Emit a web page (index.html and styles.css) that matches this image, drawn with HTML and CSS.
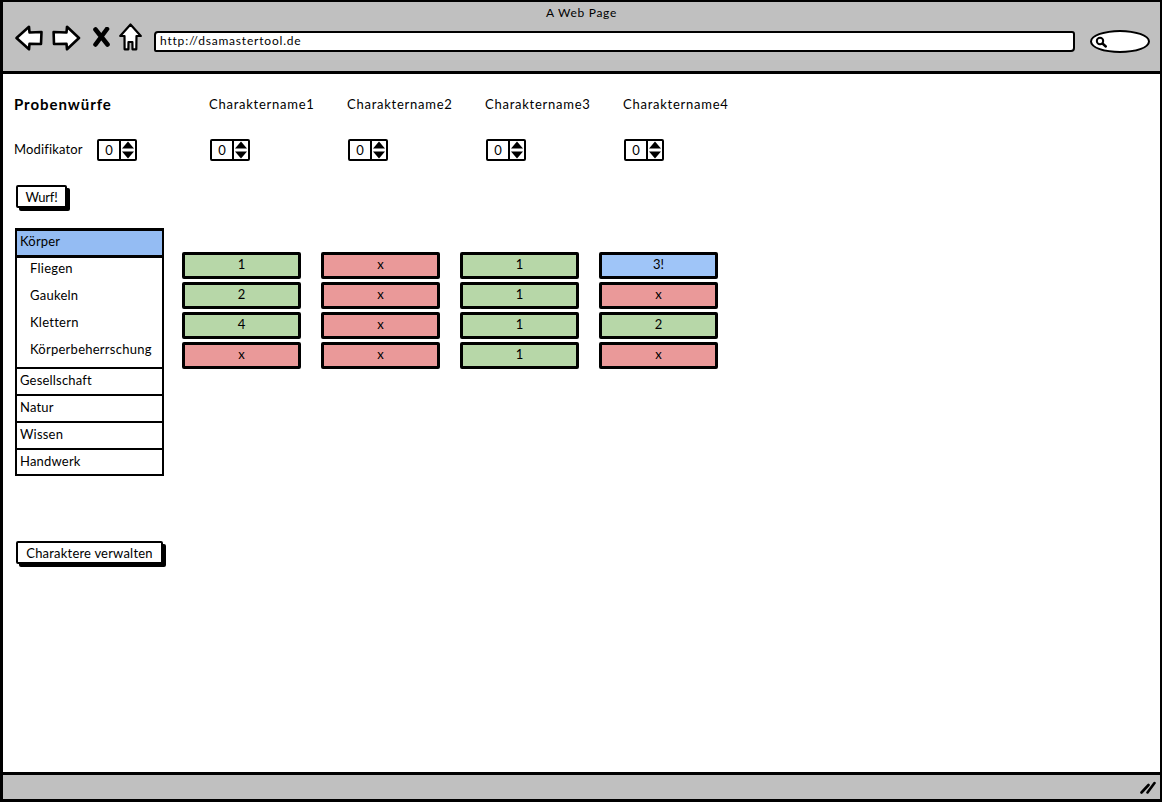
FILE: index.html
```html
<!DOCTYPE html>
<html lang="en">
<head>
<meta charset="UTF-8">
<meta name="viewport" content="width=device-width, initial-scale=1.0">
<title>A Web Page</title>
<link rel="stylesheet" href="styles.css">
</head>
<body>
<div class="window">
    <div class="chrome">
        <div class="title">A Web Page</div>
        <div class="toolbar">
            <svg class="nav-icon back" width="28" height="26" viewBox="0 0 28 26"><path d="M1.5 13 L14 1.8 L14.5 7.5 L26.5 7 L26 19 L14.5 18.8 L14 24.3 Z" fill="#fff" stroke="#000" stroke-width="2.6" stroke-linejoin="round"/></svg>
            <svg class="nav-icon forward" width="29" height="26" viewBox="0 0 29 26"><path d="M27 13 L15 1.8 L14.5 7.5 L1.6 7 L2 19 L14.5 18.8 L15 24.3 Z" fill="#fff" stroke="#000" stroke-width="2.6" stroke-linejoin="round"/></svg>
            <svg class="nav-icon stop" width="17" height="20" viewBox="0 0 17 20"><path d="M2.5 2.5 L14.5 17.5 M14 2 L2.5 17.5" fill="none" stroke="#000" stroke-width="4.6" stroke-linecap="round"/></svg>
            <svg class="nav-icon home" width="23" height="28" viewBox="0 0 23 28"><path d="M11.5 1.5 L21.8 13 L17.5 13 L17.3 26.3 L13.5 26.3 L13.4 19 L9.5 19 L9.4 26.3 L5.6 26.3 L5.5 13 L1.2 13 Z" fill="#fff" stroke="#000" stroke-width="2.2" stroke-linejoin="round"/></svg>
            <div class="url-bar">http://dsamastertool.de</div>
            <div class="search-box">
                <svg width="12" height="12" viewBox="0 0 12 12"><circle cx="5" cy="5" r="3.2" fill="none" stroke="#000" stroke-width="2"/><path d="M7.5 7.5 L10.8 10.5" stroke="#000" stroke-width="2.4" stroke-linecap="round"/></svg>
            </div>
        </div>
    </div>

    <div class="content">
        <div class="head-row">
            <h1 class="page-title">Probenwürfe</h1>
            <div class="char-name">Charaktername1</div>
            <div class="char-name">Charaktername2</div>
            <div class="char-name">Charaktername3</div>
            <div class="char-name">Charaktername4</div>
        </div>

        <div class="mod-row">
            <div class="mod-first">
                <span class="mod-label">Modifikator</span>
                <div class="spinner"><span class="spinner-value">0</span><span class="spinner-arrows"><svg width="14" height="20" viewBox="0 0 14 20"><path d="M7 1.5 L13 8.6 L1 8.6 Z M1 11.4 L13 11.4 L7 18.5 Z" fill="#000"/></svg></span></div>
            </div>
            <div class="spinner"><span class="spinner-value">0</span><span class="spinner-arrows"><svg width="14" height="20" viewBox="0 0 14 20"><path d="M7 1.5 L13 8.6 L1 8.6 Z M1 11.4 L13 11.4 L7 18.5 Z" fill="#000"/></svg></span></div>
            <div class="spinner"><span class="spinner-value">0</span><span class="spinner-arrows"><svg width="14" height="20" viewBox="0 0 14 20"><path d="M7 1.5 L13 8.6 L1 8.6 Z M1 11.4 L13 11.4 L7 18.5 Z" fill="#000"/></svg></span></div>
            <div class="spinner"><span class="spinner-value">0</span><span class="spinner-arrows"><svg width="14" height="20" viewBox="0 0 14 20"><path d="M7 1.5 L13 8.6 L1 8.6 Z M1 11.4 L13 11.4 L7 18.5 Z" fill="#000"/></svg></span></div>
            <div class="spinner"><span class="spinner-value">0</span><span class="spinner-arrows"><svg width="14" height="20" viewBox="0 0 14 20"><path d="M7 1.5 L13 8.6 L1 8.6 Z M1 11.4 L13 11.4 L7 18.5 Z" fill="#000"/></svg></span></div>
        </div>

        <button class="btn btn-roll">Wurf!</button>

        <div class="main-row">
            <div class="side">
                <div class="accordion">
                    <div class="acc-head active">Körper</div>
                    <div class="acc-body">
                        <div class="acc-item">Fliegen</div>
                        <div class="acc-item">Gaukeln</div>
                        <div class="acc-item">Klettern</div>
                        <div class="acc-item">Körperbeherrschung</div>
                    </div>
                    <div class="acc-head">Gesellschaft</div>
                    <div class="acc-head">Natur</div>
                    <div class="acc-head">Wissen</div>
                    <div class="acc-head">Handwerk</div>
                </div>
                <button class="btn btn-manage">Charaktere verwalten</button>
            </div>

            <div class="results">
                <div class="cell ok">1</div>
                <div class="cell fail">x</div>
                <div class="cell ok">1</div>
                <div class="cell crit">3!</div>
                <div class="cell ok">2</div>
                <div class="cell fail">x</div>
                <div class="cell ok">1</div>
                <div class="cell fail">x</div>
                <div class="cell ok">4</div>
                <div class="cell fail">x</div>
                <div class="cell ok">1</div>
                <div class="cell ok">2</div>
                <div class="cell fail">x</div>
                <div class="cell fail">x</div>
                <div class="cell ok">1</div>
                <div class="cell fail">x</div>
            </div>
        </div>
    </div>

    <div class="statusbar">
        <svg width="16" height="13" viewBox="0 0 16 13"><path d="M1.5 11.5 L8.5 4 M7.5 11.5 L14.5 2" fill="none" stroke="#000" stroke-width="2.6" stroke-linecap="round"/></svg>
    </div>
</div>
</body>
</html>
```

FILE: styles.css
```css
* {
    box-sizing: border-box;
}
html, body {
    margin: 0;
    padding: 0;
    background-color: #fff;
}
body {
    font-family: Lato, "Open Sans", sans-serif;
    font-size: 13px;
    color: #000;
}
.window {
    width: 1162px;
    height: 802px;
    display: flex;
    flex-direction: column;
    border: 3px solid #000;
    border-right-width: 2px;
    border-top-width: 2px;
    overflow: hidden;
}

/* browser chrome */
.chrome {
    height: 72px;
    background-color: #c0c0c0;
    border-bottom: 3px solid #000;
    flex-shrink: 0;
}
.title {
    height: 19px;
    padding-top: 3px;
    text-align: center;
    font-size: 12px;
    line-height: 15px;
    letter-spacing: 0.7px;
}
.toolbar {
    display: flex;
    align-items: center;
    height: 33px;
    padding-left: 12px;
}
.nav-icon {
    flex-shrink: 0;
    display: block;
}
.forward {
    margin-left: 9px;
}
.stop {
    margin-left: 12px;
    margin-top: -2px;
}
.home {
    margin-left: 9px;
    margin-top: -2px;
}
.url-bar {
    width: 921px;
    height: 21px;
    margin: 7px 0 0 12px;
    padding-left: 4px;
    background-color: #fff;
    border: 2.5px solid #000;
    border-radius: 4px 3px 4px 2px;
    font-size: 12px;
    line-height: 15px;
    letter-spacing: 0.8px;
}
.search-box {
    width: 60px;
    height: 23px;
    margin: 7px 0 0 15px;
    padding: 4px 0 0 3px;
    background-color: #fff;
    border: 2.5px solid #000;
    border-radius: 50%;
}
.search-box svg {
    display: block;
}

/* page content */
.content {
    flex: 1;
    padding-left: 11px;
    background-color: #fff;
}
.head-row {
    display: grid;
    grid-template-columns: 195px repeat(4, 138px);
    align-items: center;
    height: 20px;
    margin-top: 20px;
}
.page-title {
    margin: 0;
    font-size: 15px;
    font-weight: 700;
    letter-spacing: 0.95px;
}
.char-name {
    letter-spacing: 0.75px;
    white-space: nowrap;
}
.mod-row {
    display: grid;
    grid-template-columns: 195px repeat(4, 138px);
    align-items: center;
    height: 22px;
    margin-top: 25px;
}
.mod-row > .spinner {
    margin-left: 1px;
}
.mod-first {
    display: flex;
    align-items: center;
}
.mod-label {
    width: 83px;
    margin-top: -2px;
    letter-spacing: 0.15px;
}
.spinner {
    display: flex;
    width: 40px;
    height: 22px;
    background-color: #fff;
    border: 2px solid #000;
    border-radius: 2px;
}
.spinner-value {
    width: 21px;
    text-align: center;
    line-height: 18px;
}
.spinner-arrows {
    flex: 1;
    border-left: 2px solid #000;
}
.spinner-arrows svg {
    display: block;
    margin-top: -1px;
}
.btn {
    display: block;
    height: 23px;
    padding: 0;
    background-color: #fff;
    border: 2px solid #000;
    border-radius: 2px;
    box-shadow: 3px 3px 0 #000;
    font-family: inherit;
    font-size: 13px;
    letter-spacing: 0.2px;
    color: #000;
}
.btn-roll {
    width: 51px;
    margin: 24px 0 0 2px;
    letter-spacing: -0.2px;
}

/* accordion and results */
.main-row {
    display: flex;
    margin-top: 20px;
}
.side {
    width: 168px;
    flex-shrink: 0;
}
.accordion {
    width: 149px;
    margin-left: 1px;
    border: 2px solid #000;
    border-top-width: 1px;
}
.acc-head {
    height: 27px;
    padding-left: 3px;
    border-top: 2px solid #000;
    line-height: 22px;
    letter-spacing: 0.2px;
    background-color: #fff;
}
.acc-head:last-child {
    height: 26px;
}
.acc-head.active {
    background-color: #94bcf3;
    border-bottom: 1px solid #000;
    line-height: 21px;
}
.acc-body {
    border-top: 2px solid #000;
    padding: 0 0 1px 13px;
}
.acc-item {
    height: 27px;
    line-height: 20px;
    letter-spacing: 0.25px;
    white-space: nowrap;
}
.btn-manage {
    width: 147px;
    margin: 65px 0 0 2px;
}
.results {
    display: grid;
    grid-template-columns: repeat(4, 119px);
    grid-auto-rows: 27px;
    column-gap: 20px;
    row-gap: 3px;
    margin-top: 24px;
}
.cell {
    border: 3px solid #000;
    border-radius: 2px;
    text-align: center;
    line-height: 19px;
    font-size: 13px;
}
.ok {
    background-color: #b7d7a8;
}
.fail {
    background-color: #ea9999;
}
.crit {
    background-color: #9fc5f8;
}

.statusbar {
    height: 27px;
    flex-shrink: 0;
    display: flex;
    justify-content: flex-end;
    align-items: center;
    padding-right: 4px;
    background-color: #c0c0c0;
    border-top: 3px solid #000;
}
```
